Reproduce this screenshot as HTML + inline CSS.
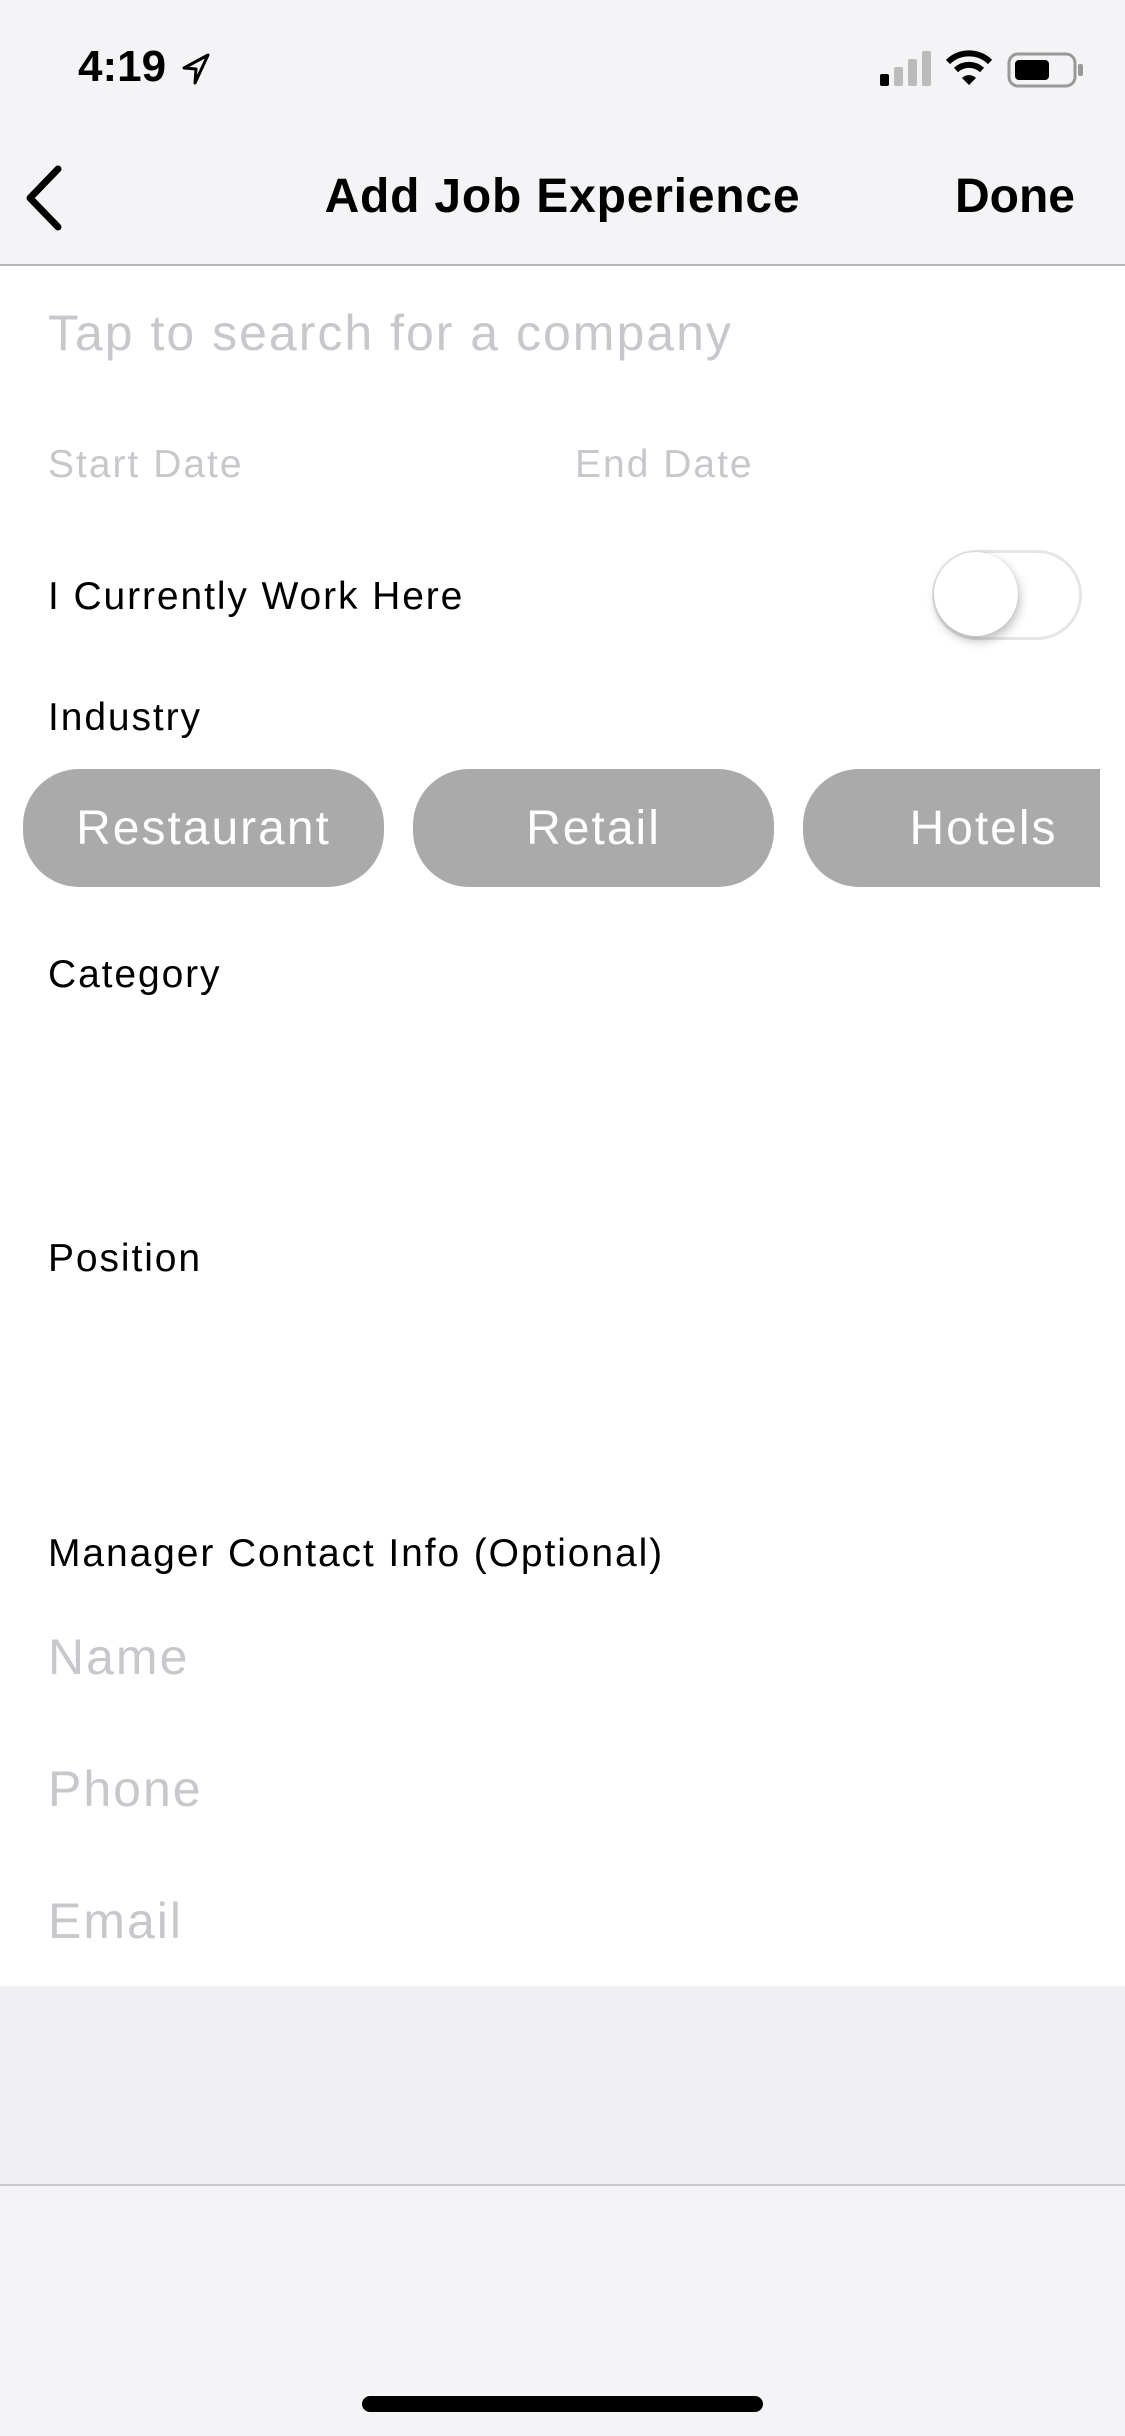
<!DOCTYPE html>
<html><head><meta charset="utf-8"><style>
*{margin:0;padding:0;box-sizing:border-box}
body{width:1125px;height:2436px;position:relative;overflow:hidden;background:#f4f4f6;font-family:"Liberation Sans",sans-serif}
.a{position:absolute;white-space:nowrap;line-height:1}
.ph{color:#c7c7cc;letter-spacing:2px}
.lbl{color:#000;font-size:39px;letter-spacing:1.9px}
.chip{position:absolute;top:769px;height:118px;background:#aaaaaa;border-radius:56px;color:#fff;font-size:48px;letter-spacing:2px;display:flex;align-items:center;justify-content:center}
</style></head><body>
<div class="a" style="left:78px;top:45px;font-size:44px;font-weight:bold;letter-spacing:0px">4:19</div>
<svg class="a" style="left:180px;top:52px" width="32" height="34" viewBox="0 0 32 34"><path d="M28 3 L4 16 L16 17 L15 31 Z" fill="none" stroke="#000" stroke-width="3" stroke-linejoin="round"/></svg>
<svg class="a" style="left:880px;top:50px" width="54" height="36"><rect x="0" y="24" width="9" height="12" rx="2" fill="#000"/><rect x="14" y="17" width="9" height="19" rx="2" fill="#bbb"/><rect x="28" y="9" width="9" height="27" rx="2" fill="#bbb"/><rect x="42" y="1" width="9" height="35" rx="2" fill="#bbb"/></svg>
<svg class="a" style="left:946px;top:50px" width="46" height="36" viewBox="0 0 46 36"><path d="M2 12 A30 30 0 0 1 44 12" fill="none" stroke="#000" stroke-width="6"/><path d="M10 20 A19 19 0 0 1 36 20" fill="none" stroke="#000" stroke-width="6"/><path d="M16 28 L23 35 L30 28 A10 10 0 0 0 16 28Z" fill="#000"/></svg>
<svg class="a" style="left:1007px;top:52px" width="78" height="36"><rect x="2" y="2" width="66" height="32" rx="9" fill="none" stroke="#999" stroke-width="3"/><rect x="8" y="8" width="34" height="20" rx="4" fill="#000"/><rect x="71" y="12" width="5" height="12" rx="2" fill="#999"/></svg>
<svg class="a" style="left:20px;top:165px" width="48" height="66"><path d="M38 4 L10 33 L38 62" fill="none" stroke="#000" stroke-width="7" stroke-linecap="round" stroke-linejoin="round"/></svg>
<div class="a" style="left:0;width:1125px;text-align:center;top:173px;font-size:48px;font-weight:bold;letter-spacing:0.8px">Add Job Experience</div>
<div class="a" style="right:50px;top:173px;font-size:48px;font-weight:bold">Done</div>
<div class="a" style="left:0;top:264px;width:1125px;height:1722px;background:#fff;border-top:2px solid #b5b5b9"></div>
<div class="a ph" style="left:48px;top:308px;font-size:50px">Tap to search for a company</div>
<div class="a ph" style="left:48px;top:445px;font-size:39px">Start Date</div>
<div class="a ph" style="left:575px;top:445px;font-size:39px">End Date</div>
<div class="a lbl" style="left:48px;top:577px">I Currently Work Here</div>
<div class="a" style="left:932px;top:550px;width:150px;height:90px;border:3px solid #e6e6e6;border-radius:45px;background:#fff"></div>
<div class="a" style="left:934px;top:552px;width:84px;height:84px;border-radius:50%;background:#fff;box-shadow:2px 5px 10px rgba(0,0,0,.25),0 0 1px rgba(0,0,0,.2)"></div>
<div class="a lbl" style="left:48px;top:698px">Industry</div>
<div class="chip" style="left:23px;width:361px">Restaurant</div>
<div class="chip" style="left:413px;width:361px">Retail</div>
<div style="position:absolute;left:803px;top:769px;width:297px;height:118px;overflow:hidden"><div class="chip" style="left:0;top:0;width:361px">Hotels</div></div>
<div class="a lbl" style="left:48px;top:955px">Category</div>
<div class="a lbl" style="left:48px;top:1239px">Position</div>
<div class="a lbl" style="left:48px;top:1534px">Manager Contact Info (Optional)</div>
<div class="a ph" style="left:48px;top:1632px;font-size:50px">Name</div>
<div class="a ph" style="left:48px;top:1764px;font-size:50px">Phone</div>
<div class="a ph" style="left:48px;top:1896px;font-size:50px">Email</div>
<div class="a" style="left:0;top:1986px;width:1125px;height:200px;background:#efeff4;border-bottom:2px solid #c8c8cc"></div>
<div class="a" style="left:362px;top:2396px;width:401px;height:16px;border-radius:8px;background:#000"></div>
</body></html>
